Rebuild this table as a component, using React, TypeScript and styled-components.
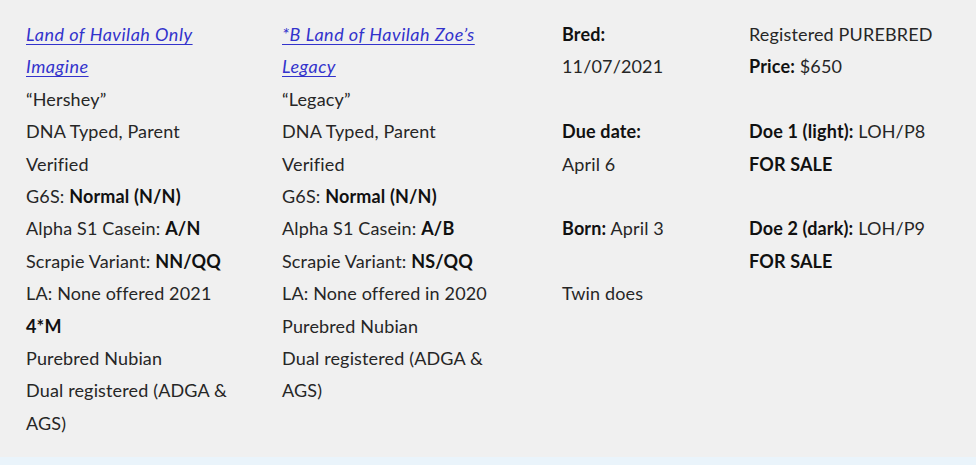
import React from "react";
import styled, { createGlobalStyle } from "styled-components";

const GlobalStyle = createGlobalStyle`
  html, body {
    margin: 0;
    padding: 0;
    background: #f0f0f0;
  }
  body {
    font-family: Lato, "Open Sans", sans-serif;
    font-size: 18px;
    letter-spacing: 0.15px;
    color: #262626;
  }
`;

const Section = styled.section`
  background: #f0f0f0;
  padding: 18px 0 18px 26px;
`;

const Columns = styled.div`
  display: grid;
  grid-template-columns: 256px 280px 187px 1fr;
  align-items: start;
`;

const Column = styled.div`
  line-height: 32.4px;
`;

const Para = styled.p<{ $gap?: boolean }>`
  margin: 0 0 ${(p) => (p.$gap ? "32.4px" : "0")} 0;
`;

const Line = styled.span`
  display: block;
  white-space: nowrap;
`;

const GoatLink = styled.a`
  color: #3333cc;
  font-style: italic;
  letter-spacing: 0.5px;
  text-decoration: underline;
  text-underline-offset: 3px;
  display: block;
  white-space: nowrap;
`;

const B = styled.strong`
  font-weight: 700;
  color: #111;
`;

const BottomStrip = styled.div`
  height: 9px;
  background: #eaf4fb;
`;

function App() {
  return (
    <>
      <GlobalStyle />
      <Section>
        <Columns>
          <Column>
            <GoatLink href="#">Land of Havilah Only</GoatLink>
            <GoatLink href="#">Imagine</GoatLink>
            <Line>“Hershey”</Line>
            <Line>DNA Typed, Parent</Line>
            <Line>Verified</Line>
            <Line>G6S: <B>Normal (N/N)</B></Line>
            <Line>Alpha S1 Casein: <B>A/N</B></Line>
            <Line>Scrapie Variant: <B>NN/QQ</B></Line>
            <Line>LA: None offered 2021</Line>
            <Line><B>4*M</B></Line>
            <Line>Purebred Nubian</Line>
            <Line>Dual registered (ADGA &amp;</Line>
            <Line>AGS)</Line>
          </Column>
          <Column>
            <GoatLink href="#">*B Land of Havilah Zoe’s</GoatLink>
            <GoatLink href="#">Legacy</GoatLink>
            <Line>“Legacy”</Line>
            <Line>DNA Typed, Parent</Line>
            <Line>Verified</Line>
            <Line>G6S: <B>Normal (N/N)</B></Line>
            <Line>Alpha S1 Casein: <B>A/B</B></Line>
            <Line>Scrapie Variant: <B>NS/QQ</B></Line>
            <Line>LA: None offered in 2020</Line>
            <Line>Purebred Nubian</Line>
            <Line>Dual registered (ADGA &amp;</Line>
            <Line>AGS)</Line>
          </Column>
          <Column>
            <Para $gap>
              <Line><B>Bred:</B></Line>
              <Line>11/07/2021</Line>
            </Para>
            <Para $gap>
              <Line><B>Due date:</B></Line>
              <Line>April 6</Line>
            </Para>
            <Para $gap>
              <Line><B>Born:</B> April 3</Line>
            </Para>
            <Para>
              <Line>Twin does</Line>
            </Para>
          </Column>
          <Column>
            <Para $gap>
              <Line>Registered PUREBRED</Line>
              <Line><B>Price:</B> $650</Line>
            </Para>
            <Para $gap>
              <Line><B>Doe 1 (light):</B> LOH/P8</Line>
              <Line><B>FOR SALE</B></Line>
            </Para>
            <Para>
              <Line><B>Doe 2 (dark):</B> LOH/P9</Line>
              <Line><B>FOR SALE</B></Line>
            </Para>
          </Column>
        </Columns>
      </Section>
      <BottomStrip />
    </>
  );
}

export default App;
